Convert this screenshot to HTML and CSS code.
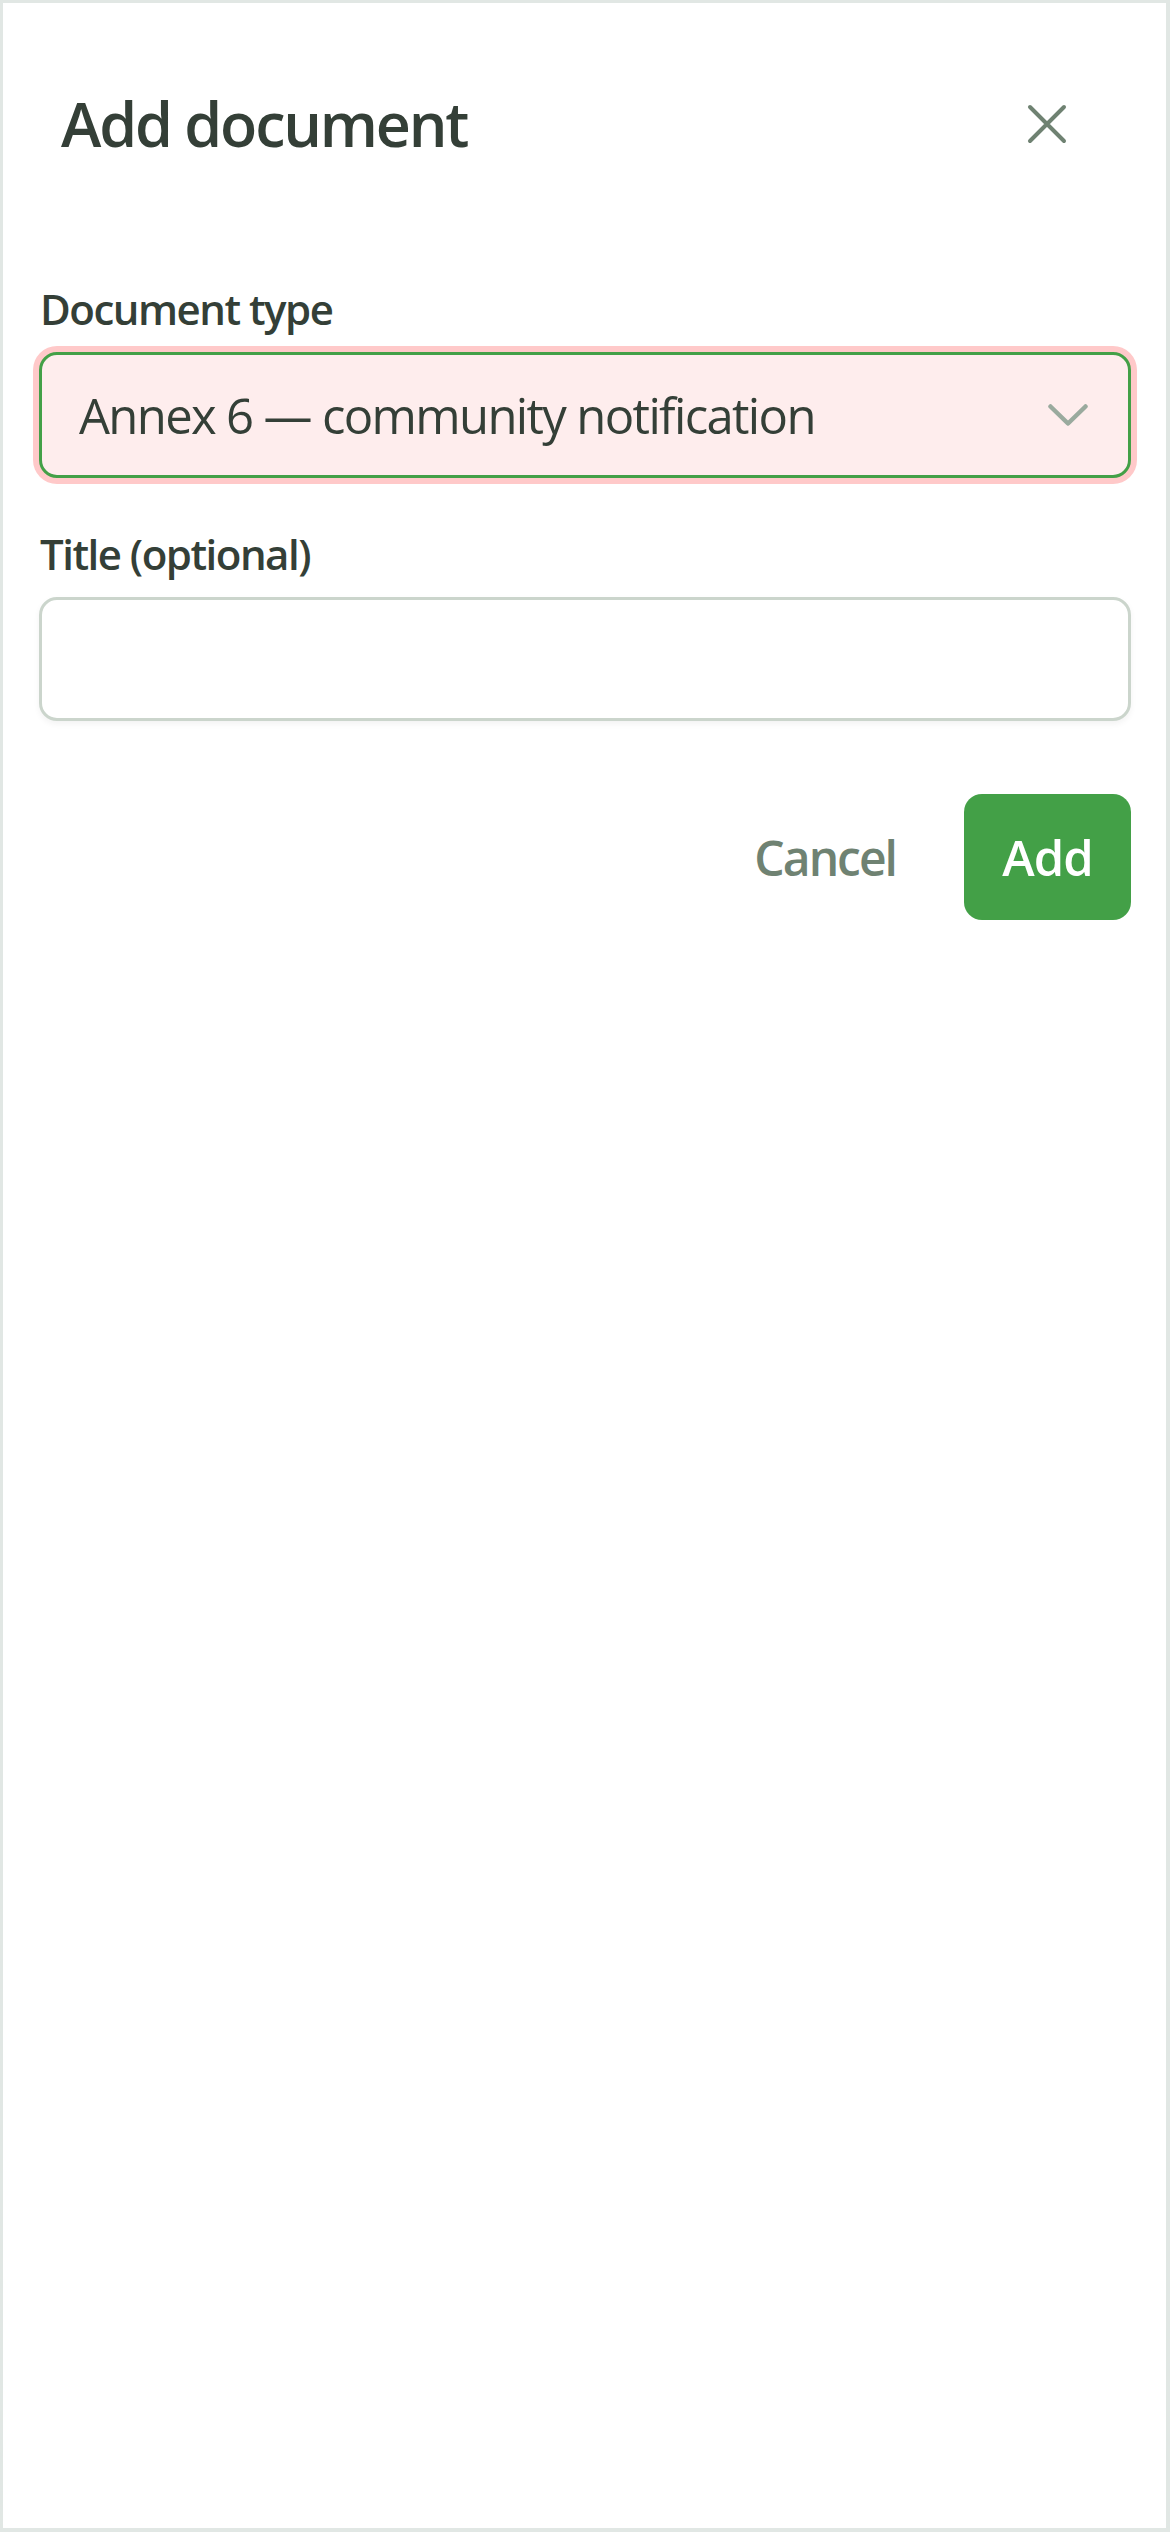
FILE: index.html
```html
<!DOCTYPE html>
<html lang="en">
<head>
<meta charset="utf-8">
<title>Add document</title>
<link rel="stylesheet" href="styles.css">
</head>
<body>
<div class="panel">
  <header class="header">
    <h1 class="title">Add document</h1>
    <button class="close" type="button" aria-label="Close">
      <svg width="40" height="40" viewBox="0 0 40 40"><path d="M3 3 L37 37 M37 3 L3 37" fill="none" stroke="#6f8272" stroke-width="4" stroke-linecap="round"/></svg>
    </button>
  </header>
  <form class="form">
    <div class="field">
      <label class="label">Document type</label>
      <div class="select">
        <span class="select-value">Annex 6 — community notification</span>
        <svg class="chevron" width="40" height="22" viewBox="0 0 40 22"><path d="M2.5 2.5 L20 19.5 L37.5 2.5" fill="none" stroke="#9aaa9e" stroke-width="4.5" stroke-linecap="round" stroke-linejoin="round"/></svg>
      </div>
    </div>
    <div class="field">
      <label class="label">Title (optional)</label>
      <div class="input"></div>
    </div>
    <div class="actions">
      <button class="btn-cancel" type="button">Cancel</button>
      <button class="btn-add" type="button">Add</button>
    </div>
  </form>
</div>
</body>
</html>
```
FILE: styles.css
```css
html, body {
  margin: 0;
  padding: 0;
}
body {
  background: #e1e7e4;
  padding: 3px 4px 4px 3px;
  font-family: "Open Sans", "Noto Sans", sans-serif;
  color: #343f37;
}
.panel {
  background: #ffffff;
  height: 2525px;
  box-sizing: border-box;
  padding: 0 35px 0 36px;
}
.header {
  display: flex;
  align-items: center;
  justify-content: space-between;
  padding: 79px 42px 0 22px;
}
.title {
  margin: 0;
  font-size: 61px;
  font-weight: 600;
  line-height: 76px;
  letter-spacing: -2.2px;
  color: #343f37;
}
.close {
  width: 84px;
  height: 84px;
  border: 0;
  background: transparent;
  padding: 0;
  display: flex;
  align-items: center;
  justify-content: center;
}
.form {
  display: flex;
  flex-direction: column;
  margin-top: 114px;
}
.field {
  display: flex;
  flex-direction: column;
  gap: 15px;
}
.field + .field {
  margin-top: 47px;
}
.label {
  font-size: 42px;
  font-weight: 600;
  line-height: 57px;
  letter-spacing: -1.5px;
  color: #343f37;
  padding-left: 1px;
}
.select {
  height: 126px;
  box-sizing: border-box;
  border: 3px solid #43a047;
  border-radius: 18px;
  background: #feeded;
  box-shadow: 0 0 0 6px #ffc9c9;
  display: flex;
  align-items: center;
  justify-content: space-between;
  padding: 0 40px 0 37px;
}
.select-value {
  font-size: 49px;
  font-weight: 400;
  letter-spacing: -1.65px;
  color: #343f37;
}
.input {
  height: 124px;
  box-sizing: border-box;
  border: 3px solid #cbd5cc;
  border-radius: 18px;
  background: #ffffff;
  box-shadow: 0 3px 6px rgba(0, 0, 0, 0.05);
}
.actions {
  display: flex;
  justify-content: flex-end;
  align-items: center;
  gap: 36px;
  margin-top: 73px;
}
.btn-cancel, .btn-add {
  font-family: "Open Sans", "Noto Sans", sans-serif;
  font-weight: 600;
  border: 0;
  height: 126px;
  border-radius: 18px;
  cursor: pointer;
}
.btn-cancel {
  background: transparent;
  color: #6f8272;
  font-size: 48px;
  letter-spacing: -2px;
  padding: 0 32px;
}
.btn-add {
  background: #43a047;
  color: #ffffff;
  font-size: 49px;
  letter-spacing: -1px;
  width: 167px;
  padding: 0;
}
```
